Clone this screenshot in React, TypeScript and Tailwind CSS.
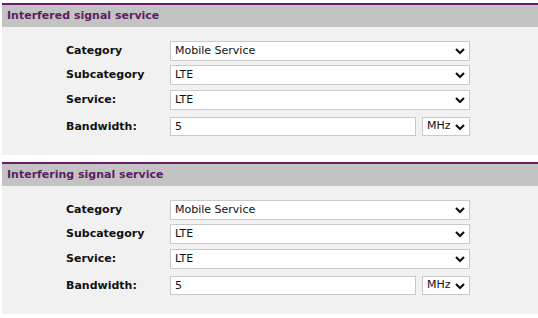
import React from "react";

const Chevron = () => (
  <svg
    width="10"
    height="7"
    viewBox="0 0 10 7"
    className="pointer-events-none absolute right-[5px] top-1/2 -translate-y-1/2"
  >
    <path d="M1 1.5 L5 5.5 L9 1.5" fill="none" stroke="#111" strokeWidth="2.2" />
  </svg>
);

const SelectBox = ({ value, className }: { value: string; className: string }) => (
  <div className={`relative ${className}`}>
    <select
      defaultValue={value}
      className="block h-full w-full appearance-none border border-[#c9c9c9] bg-white pl-[4px] text-[11px] text-[#111] outline-none"
    >
      <option>{value}</option>
    </select>
    <Chevron />
  </div>
);

const Row = ({ label, children, className }: { label: string; children: React.ReactNode; className?: string }) => (
  <div className={`flex items-center ${className ?? ""}`}>
    <label className="w-[104px] text-[11px] font-bold leading-[14px] text-[#111]">{label}</label>
    {children}
  </div>
);

const ServicePanel = ({ title }: { title: string }) => (
  <section className="border-t-2 border-[#6e1a74]">
    <div className="flex h-[22px] items-center bg-[#c3c3c3] px-[5px]">
      <h2 className="text-[11px] font-bold text-[#5b2160]">{title}</h2>
    </div>
    <div className="bg-[#f1f1f1] pl-[64px] pt-[14px] pb-[19px]">
      <Row label="Category">
        <SelectBox value="Mobile Service" className="h-[20px] w-[300px]" />
      </Row>
      <Row label="Subcategory" className="mt-[4px]">
        <SelectBox value="LTE" className="h-[20px] w-[300px]" />
      </Row>
      <Row label="Service:" className="mt-[5px]">
        <SelectBox value="LTE" className="h-[20px] w-[300px]" />
      </Row>
      <Row label="Bandwidth:" className="mt-[7px]">
        <input
          defaultValue="5"
          className="block h-[19px] w-[246px] border border-[#c9c9c9] bg-white pl-[4px] text-[11px] text-[#111] outline-none"
        />
        <SelectBox value="MHz" className="ml-[6px] h-[19px] w-[48px]" />
      </Row>
    </div>
  </section>
);

export default function App() {
  return (
    <div className="h-[318px] w-[538px] bg-white pl-[2px] pt-[3px] font-['DejaVu_Sans',Verdana,sans-serif]">
      <ServicePanel title="Interfered signal service" />
      <div className="h-[7px]" />
      <ServicePanel title="Interfering signal service" />
    </div>
  );
}
